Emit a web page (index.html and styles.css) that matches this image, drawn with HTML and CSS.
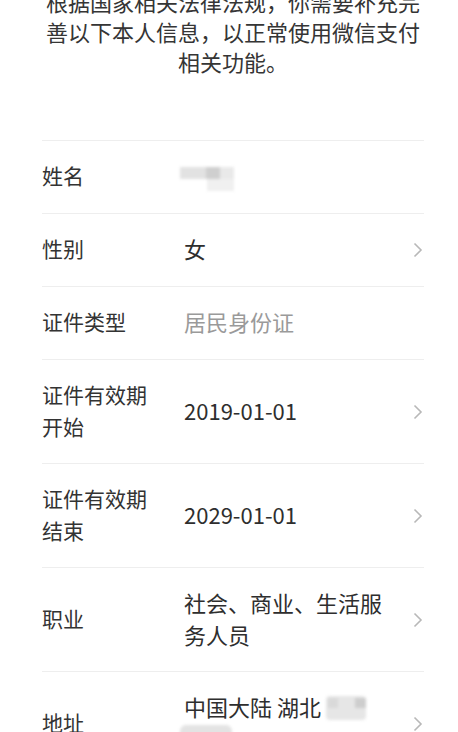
FILE: index.html
```html
<!DOCTYPE html>
<html>
	<head>
		<title>个人信息</title>
		<meta charset="UTF-8">
		<link rel="stylesheet" href="styles.css">
	</head>
	<body>
		<div class="pagina">
			<p class="aviso">根据国家相关法律法规，你需要补充完善以下本人信息，以正常使用微信支付相关功能。</p>

			<div class="lista">
				<div class="linha">
					<div class="rotulo">姓名</div>
					<div class="valor"><span class="borrao borrao-nome"></span></div>
				</div>

				<div class="linha">
					<div class="rotulo">性别</div>
					<div class="valor">女</div>
					<svg class="seta" width="10" height="16" viewBox="0 0 10 16"><polyline points="1.5,1.5 8,8 1.5,14.5"/></svg>
				</div>

				<div class="linha">
					<div class="rotulo">证件类型</div>
					<div class="valor fraco">居民身份证</div>
				</div>

				<div class="linha">
					<div class="rotulo">证件有效期<br>开始</div>
					<div class="valor">2019-01-01</div>
					<svg class="seta" width="10" height="16" viewBox="0 0 10 16"><polyline points="1.5,1.5 8,8 1.5,14.5"/></svg>
				</div>

				<div class="linha">
					<div class="rotulo">证件有效期<br>结束</div>
					<div class="valor">2029-01-01</div>
					<svg class="seta" width="10" height="16" viewBox="0 0 10 16"><polyline points="1.5,1.5 8,8 1.5,14.5"/></svg>
				</div>

				<div class="linha">
					<div class="rotulo">职业</div>
					<div class="valor">社会、商业、生活服务人员</div>
					<svg class="seta" width="10" height="16" viewBox="0 0 10 16"><polyline points="1.5,1.5 8,8 1.5,14.5"/></svg>
				</div>

				<div class="linha">
					<div class="rotulo">地址</div>
					<div class="valor">中国大陆 湖北 <span class="borrao borrao-end1"></span><br><span class="borrao borrao-end2"></span></div>
					<svg class="seta" width="10" height="16" viewBox="0 0 10 16"><polyline points="1.5,1.5 8,8 1.5,14.5"/></svg>
				</div>
			</div>
		</div>
	</body>
</html>
```

FILE: styles.css
```css
body{
	margin: 0;
	background: #ffffff;
	font-family: "Noto Sans CJK SC", "Noto Sans", sans-serif;
	color: #333333;
}

.pagina{
	padding: 0 34px 0 42px;
}

.aviso{
	margin: -14px 0 0 0;
	font-size: 22px;
	line-height: 30px;
	text-align: center;
	color: #353535;
}

.lista{
	margin-top: 64px;
}

.linha{
	display: flex;
	align-items: center;
	box-sizing: border-box;
	min-height: 73px;
	padding: 19px 0 21px 0;
	border-top: 1px solid #eeeeee;
	font-size: 21px;
	line-height: 31.5px;
}

.rotulo{
	width: 142px;
	flex-shrink: 0;
	color: #333333;
}

.valor{
	flex: 1;
	max-width: 205px;
	font-size: 22px;
	color: #2e2e2e;
}

.fraco{
	color: #9a9a9a;
}

.seta{
	margin-left: auto;
	margin-right: 1px;
	margin-top: 2px;
	flex-shrink: 0;
}

.seta polyline{
	fill: none;
	stroke: #b8b8b8;
	stroke-width: 1.6;
}

.borrao{
	display: inline-block;
	vertical-align: middle;
	filter: blur(1.5px);
}

.borrao-nome{
	width: 54px;
	height: 26px;
	margin-left: -4px;
	background:
		linear-gradient(#cfcfcf, #cfcfcf) 26px 1px / 14px 12px no-repeat,
		linear-gradient(#e2e2e2, #e2e2e2) 0 1px / 26px 12px no-repeat,
		linear-gradient(#e9e9e9, #e9e9e9) 40px 1px / 14px 12px no-repeat,
		linear-gradient(#f0f0f0, #f0f0f0) 27px 13px / 28px 12px no-repeat;
}

.borrao-end1{
	width: 40px;
	height: 24px;
	margin-top: -4px;
	border-radius: 4px;
	background:
		linear-gradient(#cdcdcd, #cdcdcd) 29px 2px / 11px 10px no-repeat,
		linear-gradient(#d9d9d9, #d9d9d9) 2px 2px / 10px 10px no-repeat,
		#e6e6e6;
}

.borrao-end2{
	vertical-align: top;
	width: 52px;
	height: 18px;
	margin-left: -4px;
	margin-top: 2px;
	border-radius: 6px;
	background: #e3e3e3;
}
```
